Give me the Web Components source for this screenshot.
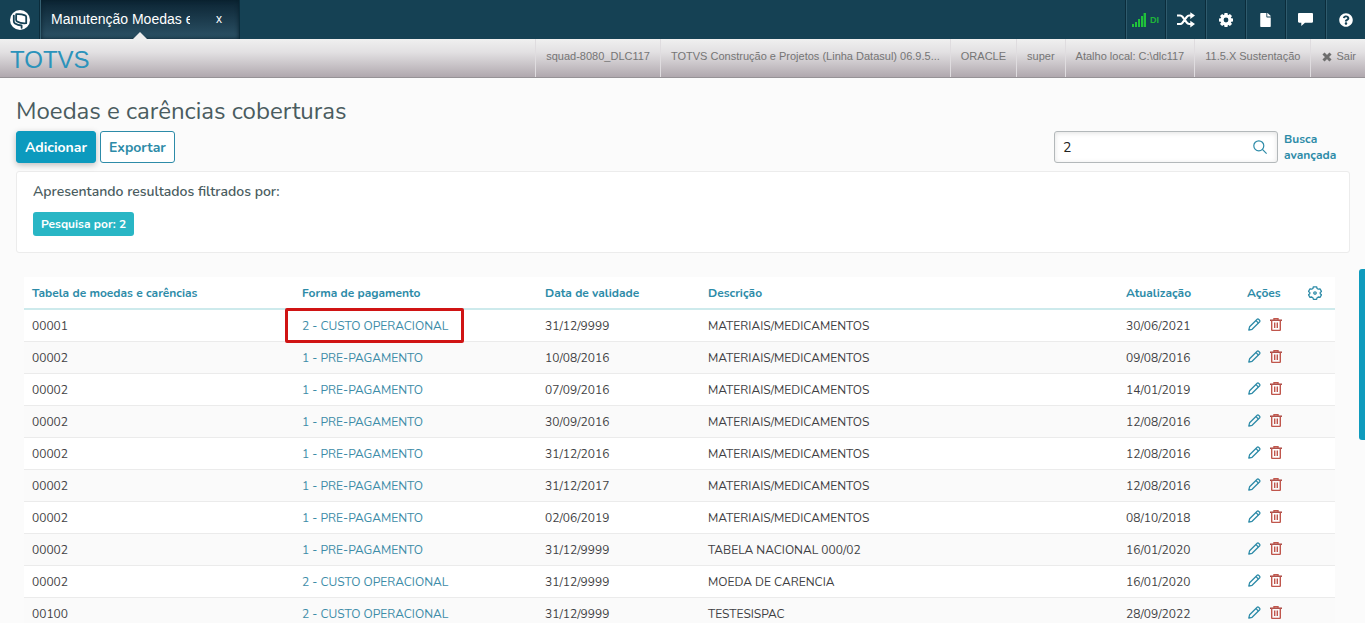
<!DOCTYPE html>
<html lang="pt-BR">
<head>
<meta charset="utf-8">
<meta name="viewport" content="width=device-width, initial-scale=1">
<title>Moedas e carências coberturas</title>
<style>
  html, body { margin: 0; height: 100%; }
  body { overflow: hidden; background: #fbfbfb; font-family: Nunito, "Open Sans", "Noto Sans", sans-serif; font-size: 12px; color: #4a5c60; }
</style>
</head>
<body>
<app-shell>
  <top-bar slot="top">
    <nav-tab label="Manutenção Moedas e"></nav-tab>
    <tool-button slot="tools" name="signal" label="Conexão">DI</tool-button>
    <tool-button slot="tools" name="shuffle" label="Alternar"></tool-button>
    <tool-button slot="tools" name="cog" label="Configurações"></tool-button>
    <tool-button slot="tools" name="file" label="Documentos"></tool-button>
    <tool-button slot="tools" name="chat" label="Mensagens"></tool-button>
    <tool-button slot="tools" name="help" label="Ajuda"></tool-button>
  </top-bar>
  <session-bar slot="top" brand="TOTVS">
    <session-item>squad-8080_DLC117</session-item>
    <session-item>TOTVS Construção e Projetos (Linha Datasul) 06.9.5...</session-item>
    <session-item>ORACLE</session-item>
    <session-item>super</session-item>
    <session-item>Atalho local: C:\dlc117</session-item>
    <session-item>11.5.X Sustentação</session-item>
    <session-item href="#sair">Sair</session-item>
  </session-bar>
  <page-header heading="Moedas e carências coberturas">
    <action-button primary>Adicionar</action-button>
    <action-button>Exportar</action-button>
    <search-box slot="search" value="2"></search-box>
  </page-header>
  <filter-panel heading="Apresentando resultados filtrados por:">
    <filter-tag>Pesquisa por: 2</filter-tag>
  </filter-panel>
  <data-grid></data-grid>
</app-shell>

<script>
const define = (name, html, setup) => {
  const template = document.createElement('template');
  template.innerHTML = html;
  customElements.define(name, class extends HTMLElement {
    connectedCallback() {
      if (this.shadowRoot) return;
      const root = this.attachShadow({ mode: 'open' });
      root.append(template.content.cloneNode(true));
      if (setup) setup(this, root);
    }
  });
};

const icons = {
  logo: '<svg viewBox="0 0 20 20" width="20" height="20"><circle cx="10" cy="10" r="10" fill="#fff"/><g fill="none" stroke="#154154" stroke-width="1.800" stroke-linejoin="round" stroke-linecap="round"><path d="M6.200 4.200c3.200-.3 6.200.1 8.900 1.200.8.300 1.100.8 1.100 1.600v6.200c-3.200.3-6.400-.2-9.100-1.700-.7-.4-1-.9-1-1.700z"/><path d="M3.800 5.600v5.700c0 1 .4 1.600 1.200 2.100 2 1.300 4.200 1.900 6.600 2.100v2.300"/></g></svg>',
  signal: '<svg viewBox="0 0 14 14" width="14" height="14" fill="#1fc23a"><path d="M0 11h2v3H0zM3 9h2v5H3zM6 6h2v8H6zM9 3h2v11H9zM11.600 0H14v14h-2.400z"/></svg>',
  shuffle: '<svg viewBox="0 0 18 16" width="18" height="16"><path d="M0 3.500h3.200c1 0 1.600.4 2.200 1.200l4.400 6c.6.900 1.300 1.300 2.300 1.300H14M0 12h3.200c1 0 1.600-.4 2.200-1.200l4.400-6C10.400 4 11.100 3.500 12.100 3.500H14" fill="none" stroke="#fff" stroke-width="2.200"/><path fill="#fff" d="M13.300.2 18 3.600 13.300 7zM13.300 8.800l4.700 3.300-4.700 3.400z"/></svg>',
  cog: '<svg viewBox="-8 -8 16 16" width="16" height="16"><circle r="3.900" fill="none" stroke="#fff" stroke-width="3"/><g fill="#fff"><path d="M-1.500-7h3l.5 3h-4zM-1.500 7h3l.5-3h-4zM-7-1.500v3l3 .5v-4zM7-1.500v3l-3 .5v-4z"/><path transform="rotate(45)" d="M-1.500-7h3l.5 3h-4zM-1.500 7h3l.5-3h-4zM-7-1.500v3l3 .5v-4zM7-1.500v3l-3 .5v-4z"/></g></svg>',
  file: '<svg viewBox="0 0 384 512" width="11" height="14" fill="#fff"><path d="M224 136V0H24C10.700 0 0 10.700 0 24v464c0 13.300 10.700 24 24 24h336c13.300 0 24-10.700 24-24V160H248c-13.200 0-24-10.800-24-24zm160-14.100v6.100H256V0h6.100c6.400 0 12.500 2.500 17 7l97.900 98c4.500 4.500 7 10.600 7 16.900z"/></svg>',
  chat: '<svg viewBox="0 0 15 13" width="15" height="13" fill="#fff"><path d="M1.200 0h12.600C14.600 0 15 .5 15 1.200v7.300c0 .8-.4 1.200-1.200 1.200H7L3.300 13V9.700H1.200C.4 9.700 0 9.300 0 8.500V1.200C0 .5.400 0 1.200 0z"/></svg>',
  help: '<svg viewBox="0 0 512 512" width="14" height="14" fill="#fff"><path d="M504 256c0 136.997-111.043 248-248 248S8 392.997 8 256C8 119.083 119.043 8 256 8s248 111.083 248 248zM262.655 90c-54.497 0-89.255 22.957-116.549 63.758-3.536 5.286-2.353 12.415 2.715 16.258l34.699 26.310c5.205 3.947 12.621 3.008 16.665-2.122 17.864-22.658 30.113-35.797 57.303-35.797 20.429 0 45.698 13.148 45.698 32.958 0 14.976-12.363 22.667-32.534 33.976C247.128 238.528 216 254.941 216 296v4c0 6.627 5.373 12 12 12h56c6.627 0 12-5.373 12-12v-1.333c0-28.462 83.186-29.647 83.186-106.667 0-58.002-60.165-102-116.531-102zM256 338c-25.365 0-46 20.635-46 46 0 25.364 20.635 46 46 46s46-20.636 46-46c0-25.365-20.635-46-46-46z"/></svg>',
  times: '<svg viewBox="0 0 10 10" width="10" height="10"><path d="M1.500 1.500l7 7M8.500 1.500l-7 7" stroke="#6d6d6d" stroke-width="3"/></svg>',
  search: '<svg viewBox="0 0 14 14" width="14" height="14" fill="none" stroke="#2d8ba8" stroke-width="1.200"><circle cx="5.800" cy="5.800" r="5"/><path d="M9.400 9.400l4.200 4.200"/></svg>',
  pencil: '<svg viewBox="0 0 13 13" width="13" height="13" fill="none" stroke="#2d8ba8" stroke-width="1.300" stroke-linejoin="round"><path d="M.8 12.200l.8-3.400 7.600-7.600c.9-.9 3.400 1.400 2.500 2.500L4.100 11.300z"/><path d="M8 2.600l2.400 2.400"/></svg>',
  trash: '<svg viewBox="0 0 12 13" width="12" height="13" fill="none" stroke="#c0564c" stroke-width="1.400"><path d="M0 2.200h12" stroke="#a5403a"/><path d="M4 2V.700h4V2M1.700 2.500v9.200c0 .4.200.700.700.700h7.200c.5 0 .7-.3.700-.7V2.500M4.700 4.500v5.600M7.300 4.500v5.600"/></svg>',
  gear: '<svg viewBox="-7 -7 14 14" width="14" height="14" fill="none" stroke="#2d8ba8" stroke-width="1.300" stroke-linejoin="round"><path d="M-1.600-6.200h3.200l.5 1.700 1.200.7 1.700-.4 1.500 2.600L5.200-.5v1.200l1.300 1.100L5 4.400l-1.700-.4-1.200.7-.5 1.600h-3.200l-.5-1.600-1.200-.7-1.700.4-1.500-2.600 1.300-1.100V-.5l-1.300-1.100L-5-4.200l1.700.4 1.200-.7z"/><circle r="1.200"/></svg>'
};

define('app-shell', `
<style>
  :host { display: flex; flex-direction: column; height: 100vh; overflow: hidden; position: relative; }
  main { flex: 1; min-height: 0; overflow: hidden; padding: 16px 15px 0 16px; }
  .thumb { position: absolute; right: 0; top: 269px; width: 6px; height: 171px; border-radius: 3px 0 0 3px; background: #0f9bbd; }
</style>
<slot name="top"></slot>
<main><slot></slot></main>
<div class="thumb"></div>`);

define('top-bar', `
<style>
  :host { display: flex; flex: none; height: 39px; background: #154154; font-family: "Liberation Sans", Arial, sans-serif; }
  .home { width: 40px; padding: 0; border: 0; border-right: 1px solid #0b2c3b; background: none; display: grid; place-items: center; }
  .tools { margin-left: auto; display: flex; }
</style>
<button class="home" aria-label="Início">${icons.logo}</button>
<slot></slot>
<div class="tools"><slot name="tools"></slot></div>`);

define('nav-tab', `
<style>
  :host { display: flex; align-items: center; position: relative; box-sizing: border-box; width: 200px; padding: 0 14px 2px 10px; border-left: 1px solid #356072; border-right: 1px solid #0b2c3b;
    background: linear-gradient(#0b2433, #2c5266); color: #fff; box-shadow: inset 0 0 4px #08202c; }
  a { width: 139px; overflow: hidden; white-space: nowrap; color: inherit; text-decoration: none; font-size: 14px; line-height: 20px; }
  button { margin-left: auto; width: 12px; padding: 0; border: 0; background: none; color: #fff; font: 12px/20px "Liberation Sans", Arial, sans-serif; }
  i { position: absolute; left: 50%; bottom: 0; margin-left: -7px; border: 7px solid transparent; border-top: 0; border-bottom-color: #eee; }
</style>
<a href="#manutencao"></a><button aria-label="Fechar aba">x</button><i></i>`,
(host, root) => { root.querySelector('a').textContent = host.getAttribute('label'); });

define('tool-button', `
<style>
  :host { display: block; }
  button { box-sizing: border-box; width: 40px; height: 39px; padding: 0; border: 0; border-left: 1px solid #0b2c3b; background: none; box-shadow: inset 1px 0 #2f5b6d;
    display: flex; align-items: center; justify-content: center; gap: 4px; color: #1fb53a; font: bold 9px/12px "Liberation Sans", Arial, sans-serif; }
  svg { flex: none; display: block; }
  slot { display: contents; }
</style>
<button><slot></slot></button>`,
(host, root) => {
  const button = root.querySelector('button');
  button.setAttribute('aria-label', host.getAttribute('label'));
  button.insertAdjacentHTML('afterbegin', icons[host.getAttribute('name')]);
});

define('session-bar', `
<style>
  :host { display: flex; flex: none; box-sizing: border-box; height: 39px; border-bottom: 1px solid #969296;
    background: linear-gradient(#f0f0f0, #e2e0e2 35%, #b0a8ae); font-family: "Liberation Sans", Arial, sans-serif; }
  .brand { margin: 0 auto 0 10px; font-size: 24px; line-height: 41px; color: #2b93bb; }
  nav { display: flex; }
</style>
<span class="brand"></span><nav><slot></slot></nav>`,
(host, root) => { root.querySelector('.brand').textContent = host.getAttribute('brand'); });

define('session-item', `
<style>
  :host { display: block; padding: 0 10px; border-left: 1px solid #dfdcdf; font-size: 11px; line-height: 35px; color: #757575; white-space: nowrap; }
  :host([href]) { padding: 0 9px 0 11px; }
  a { display: flex; align-items: center; gap: 4px; color: inherit; text-decoration: none; }
</style>
<slot></slot>`,
(host, root) => {
  if (!host.hasAttribute('href')) return;
  const link = document.createElement('a');
  link.href = host.getAttribute('href');
  link.innerHTML = icons.times;
  link.append(root.querySelector('slot'));
  root.append(link);
});

define('page-header', `
<style>
  :host { display: block; }
  h1 { margin: 0; font-size: 24px; font-weight: 400; line-height: 34px; color: #4a5c60; }
  .row { display: flex; gap: 4px; align-items: center; margin-top: 3px; }
  .search { margin-left: auto; }
</style>
<h1></h1>
<div class="row"><slot></slot><div class="search"><slot name="search"></slot></div></div>`,
(host, root) => { root.querySelector('h1').textContent = host.getAttribute('heading'); });

define('action-button', `
<style>
  :host { display: block; }
  button { box-sizing: border-box; height: 32px; padding: 2px 8px 0; border: 1px solid #2d8ba8; border-radius: 3px; background: #fff; color: #2d8ba8; font: 700 14px/20px Nunito, "Open Sans", sans-serif; }
  :host([primary]) button { background: #0c9abe; border-color: #0c9abe; color: #fff; box-shadow: 0 2px 6px rgba(0,0,0,.25); }
</style>
<button><slot></slot></button>`);

define('search-box', `
<style>
  :host { display: flex; gap: 6px; align-items: center; }
  .field { box-sizing: border-box; display: flex; align-items: center; width: 224px; height: 32px; padding: 0 10px 0 8px; border: 1px solid #b3b8ba; border-radius: 3px; background: #fff; box-shadow: inset 0 1px 5px rgba(0,0,0,.12); }
  input { flex: 1; min-width: 0; padding: 2px 0 0; border: 0; outline: 0; background: none; color: #222; font: 14px/20px Nunito, "Open Sans", sans-serif; }
  button { padding: 0; border: 0; background: none; display: grid; }
  label { display: contents; }
  a { width: 66px; color: #2d8ba8; font-size: 12px; font-weight: 700; line-height: 16px; text-decoration: none; }
</style>
<div class="field"><label><input type="text" aria-label="Pesquisar"></label><button aria-label="Buscar">${icons.search}</button></div>
<a href="#busca">Busca avançada</a>`,
(host, root) => { root.querySelector('input').value = host.getAttribute('value'); });

define('filter-panel', `
<style>
  :host { display: block; box-sizing: border-box; margin-top: 8px; padding: 10px 16px 16px; border: 1px solid #ececec; border-radius: 3px; background: #fff; }
  h2 { margin: 0 0 10px; font-size: 14px; font-weight: 600; line-height: 20px; color: #4a5c60; }
  div { display: flex; gap: 8px; }
</style>
<h2></h2><div><slot></slot></div>`,
(host, root) => { root.querySelector('h2').textContent = host.getAttribute('heading'); });

define('filter-tag', `
<style>
  :host { display: block; padding: 0 8px; border-radius: 3px; background: #29b6c5; color: #fff; font-size: 12px; font-weight: 700; line-height: 24px; }
</style>
<slot></slot>`);

const rows = [
  ['00001', '2 - CUSTO OPERACIONAL', '31/12/9999', 'MATERIAIS/MEDICAMENTOS', '30/06/2021'],
  ['00002', '1 - PRE-PAGAMENTO', '10/08/2016', 'MATERIAIS/MEDICAMENTOS', '09/08/2016'],
  ['00002', '1 - PRE-PAGAMENTO', '07/09/2016', 'MATERIAIS/MEDICAMENTOS', '14/01/2019'],
  ['00002', '1 - PRE-PAGAMENTO', '30/09/2016', 'MATERIAIS/MEDICAMENTOS', '12/08/2016'],
  ['00002', '1 - PRE-PAGAMENTO', '31/12/2016', 'MATERIAIS/MEDICAMENTOS', '12/08/2016'],
  ['00002', '1 - PRE-PAGAMENTO', '31/12/2017', 'MATERIAIS/MEDICAMENTOS', '12/08/2016'],
  ['00002', '1 - PRE-PAGAMENTO', '02/06/2019', 'MATERIAIS/MEDICAMENTOS', '08/10/2018'],
  ['00002', '1 - PRE-PAGAMENTO', '31/12/9999', 'TABELA NACIONAL 000/02', '16/01/2020'],
  ['00002', '2 - CUSTO OPERACIONAL', '31/12/9999', 'MOEDA DE CARENCIA', '16/01/2020'],
  ['00100', '2 - CUSTO OPERACIONAL', '31/12/9999', 'TESTESISPAC', '28/09/2022']
];

define('data-grid', `
<style>
  :host { display: block; margin: 24px 15px 0 8px; }
  table { width: 100%; table-layout: fixed; border-collapse: separate; border-spacing: 0; background: #fff; }
  .code { width: 270px; } .form { width: 243px; } .date { width: 163px; } .update { width: 121px; } .actions { width: 56px; } .config { width: 40px; }
  th, td { box-sizing: border-box; height: 32px; padding: 0 8px; text-align: left; white-space: nowrap; line-height: 20px; font-size: 12px; }
  th { height: 33px; border-bottom: 2px solid #cdeaec; color: #2d8ba8; font-weight: 700; }
  td { border-bottom: 1px solid #ebebeb; color: #3f3f44; }
  tr:nth-child(even) td { background: #fafafa; }
  td a { color: #3d8ca8; text-decoration: none; }
  .tools { display: flex; gap: 9px; padding: 0 0 2px 1px; }
  button { padding: 0; border: 0; background: none; display: grid; }
  th:last-child { padding: 0 13px; }
  .marked { position: relative; overflow: visible; }
  .marked span { position: absolute; box-sizing: border-box; left: -9px; top: -2px; width: 179px; height: 35px; border: 3px solid #d01414; border-radius: 2px; pointer-events: none; }
</style>
<table>
  <colgroup><col class="code"><col class="form"><col class="date"><col><col class="update"><col class="actions"><col class="config"></colgroup>
  <thead><tr><th>Tabela de moedas e carências</th><th>Forma de pagamento</th><th>Data de validade</th><th>Descrição</th><th>Atualização</th><th>Ações</th><th><button aria-label="Configurar colunas">${icons.gear}</button></th></tr></thead>
  <tbody></tbody>
</table>`,
(host, root) => {
  root.querySelector('tbody').innerHTML = rows.map(([code, form, date, text, update], i) => `
    <tr><td>${code}</td><td${i ? '' : ' class="marked"'}><a href="#forma">${form}</a>${i ? '' : '<span></span>'}</td><td>${date}</td><td>${text}</td><td>${update}</td>
    <td><div class="tools"><button aria-label="Editar">${icons.pencil}</button><button aria-label="Excluir">${icons.trash}</button></div></td><td></td></tr>`).join('');
});
</script>
</body>
</html>
